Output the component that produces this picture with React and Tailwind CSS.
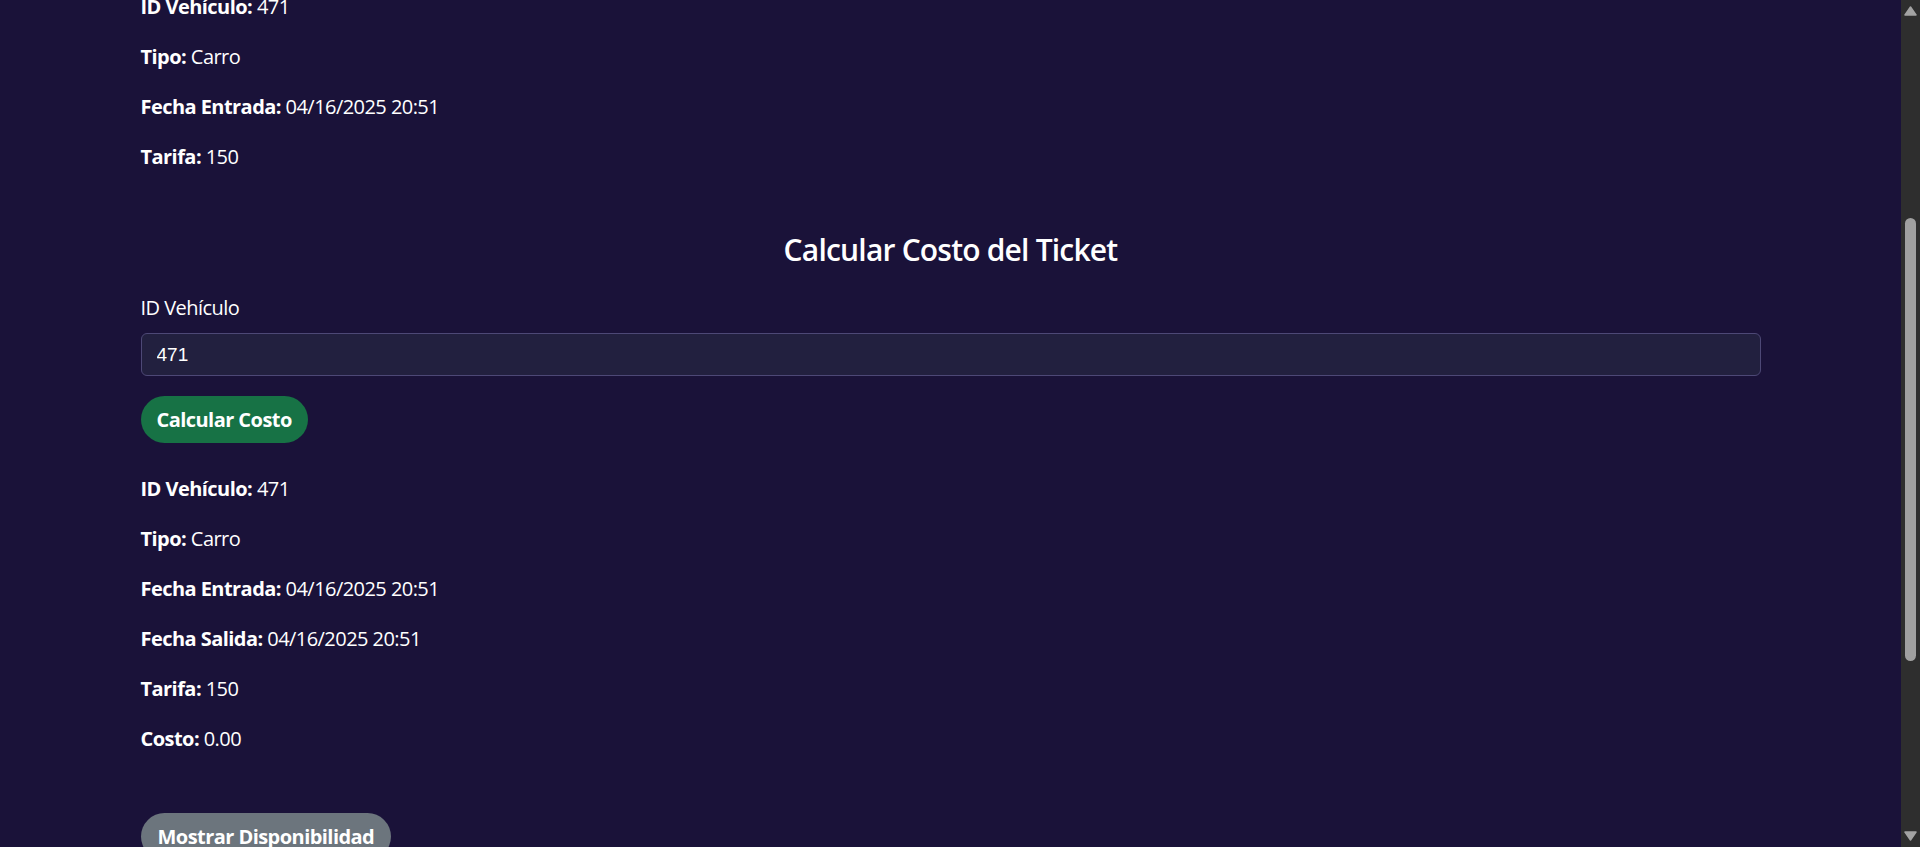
import React from 'react'

const ticket = [
  ['ID Vehículo', '471'],
  ['Tipo', 'Carro'],
  ['Fecha Entrada', '04/16/2025 20:51'],
  ['Tarifa', '150'],
]

const costo = [
  ['ID Vehículo', '471'],
  ['Tipo', 'Carro'],
  ['Fecha Entrada', '04/16/2025 20:51'],
  ['Fecha Salida', '04/16/2025 20:51'],
  ['Tarifa', '150'],
  ['Costo', '0.00'],
]

function Field({ label, value }) {
  return (
    <p className="text-[20px] leading-[30px] tracking-[-0.55px] mb-[20px] last:mb-0">
      <strong className="font-bold">{label}:</strong> {value}
    </p>
  )
}

export default function App() {
  return (
    <div
      className="h-[847px] w-full flex overflow-hidden bg-[#1a1239] text-white"
      style={{ fontFamily: '"Open Sans", "Noto Sans", sans-serif' }}
    >
      {/* page */}
      <div className="flex-1 overflow-hidden">
        <div className="w-[1620px] mx-auto">
          {/* ticket info (scrolled past) */}
          <div className="-mt-[8px]">
            {ticket.map(([l, v]) => (
              <Field key={l} label={l} value={v} />
            ))}
          </div>

          <h2 className="mt-[60px] text-center text-[30px] leading-[36px] tracking-[-0.8px] font-semibold">
            Calcular Costo del Ticket
          </h2>

          <label className="block mt-[25px] text-[20px] leading-[30px] tracking-[-0.55px]">ID Vehículo</label>
          <input
            readOnly
            value="471"
            className="mt-[10px] block w-full h-[43px] px-[15px] rounded-[6px] bg-[#22203f] border border-[#4d4876] text-white text-[19px] outline-none"
            style={{ fontFamily: '"Liberation Sans", Arial, sans-serif' }}
          />

          <button className="mt-[20px] h-[47px] px-[16px] flex items-center rounded-full bg-[#177245] text-[20px] tracking-[-0.55px] font-bold text-white">
            Calcular Costo
          </button>

          <div className="mt-[31px]">
            {costo.map(([l, v]) => (
              <Field key={l} label={l} value={v} />
            ))}
          </div>

          <button className="mt-[59px] h-[47px] px-[17px] flex items-center rounded-full bg-[#6c757d] text-[20px] tracking-[-0.55px] font-bold text-white">
            Mostrar Disponibilidad
          </button>
        </div>
      </div>

      {/* scrollbar */}
      <div className="w-[19px] h-full bg-[#2e2e2e] flex flex-col items-center">
        <svg width="13" height="10" viewBox="0 0 13 10" className="mt-[6px]">
          <path d="M6.5 1 L12 9 L1 9 Z" fill="#a3a3a3" strokeLinejoin="round" stroke="#a3a3a3" strokeWidth="1.5" />
        </svg>
        <div className="mt-[202px] w-[11px] h-[443px] rounded-full bg-[#a0a0a0]" />
        <div className="flex-1" />
        <svg width="13" height="10" viewBox="0 0 13 10" className="mb-[6px]">
          <path d="M1 1 L12 1 L6.5 9 Z" fill="#a3a3a3" strokeLinejoin="round" stroke="#a3a3a3" strokeWidth="1.5" />
        </svg>
      </div>
    </div>
  )
}
